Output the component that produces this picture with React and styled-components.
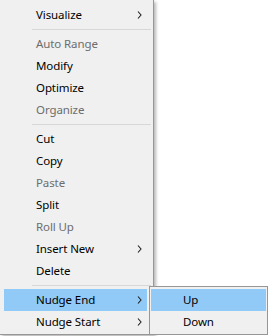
import React from 'react'
import styled, { createGlobalStyle } from 'styled-components'

const GlobalStyle = createGlobalStyle`
  html, body {
    margin: 0;
    padding: 0;
    background: #fff;
  }
  body {
    font-family: 'Noto Sans', 'Open Sans', sans-serif;
    font-size: 11.5px;
    letter-spacing: -0.1px;
  }
`

const Page = styled.div`
  width: 268px;
  height: 336px;
  overflow: hidden;
  position: relative;
`

const Menu = styled.div`
  position: relative;
  width: 149px;
  padding: 4px 0 1px 4px;
  background: #f0f0f0;
  border-right: 1px solid #979797;
  border-bottom: 1px solid #979797;
  box-shadow: 2px 2px 3px rgba(0, 0, 0, 0.28);
`

const Item = styled.div`
  position: relative;
  display: flex;
  align-items: center;
  height: 22px;
  width: ${p => (p.sub ? '115px' : '143px')};
  padding-left: 32px;
  box-sizing: border-box;
  color: ${p => (p.disabled ? '#6d6d6d' : '#000')};
  background: ${p => (p.active ? '#91c9f7' : 'transparent')};
  white-space: nowrap;
`

const Label = styled.span`
  flex: 1;
  line-height: 22px;
`

const Arrow = styled.svg`
  width: 5px;
  height: 8px;
  margin-right: 5px;
`

const Separator = styled.div`
  height: 1px;
  margin: 3px 2px 3px 28px;
  background: #d7d7d7;
`

const SubMenu = styled.div`
  position: absolute;
  top: -3px;
  left: 145px;
  width: 115px;
  padding: 2px 1px 1px 1px;
  background: #f0f0f0;
  border: 1px solid #979797;
  z-index: 2;
`

const Chevron = () => (
  <Arrow viewBox="0 0 5 8">
    <path d="M1 0.5 L4 4 L1 7.5" fill="none" stroke="#202020" strokeWidth="1.1" />
  </Arrow>
)

const groups = [
  [{ label: 'Visualize', sub: true }],
  [
    { label: 'Auto Range', disabled: true },
    { label: 'Modify' },
    { label: 'Optimize' },
    { label: 'Organize', disabled: true }
  ],
  [
    { label: 'Cut' },
    { label: 'Copy' },
    { label: 'Paste', disabled: true },
    { label: 'Split' },
    { label: 'Roll Up', disabled: true },
    { label: 'Insert New', sub: true },
    { label: 'Delete' }
  ],
  [
    { label: 'Nudge End', sub: true, active: true, open: true },
    { label: 'Nudge Start', sub: true }
  ]
]

export default function App() {
  return (
    <Page>
      <GlobalStyle />
      <Menu>
        {groups.map((group, gi) => (
          <React.Fragment key={gi}>
            {gi > 0 && <Separator />}
            {group.map(item => (
              <Item key={item.label} disabled={item.disabled} active={item.active}>
                <Label>{item.label}</Label>
                {item.sub && <Chevron />}
                {item.open && (
                  <SubMenu>
                    <Item sub active>
                      <Label>Up</Label>
                    </Item>
                    <Item sub>
                      <Label>Down</Label>
                    </Item>
                  </SubMenu>
                )}
              </Item>
            ))}
          </React.Fragment>
        ))}
      </Menu>
    </Page>
  )
}
